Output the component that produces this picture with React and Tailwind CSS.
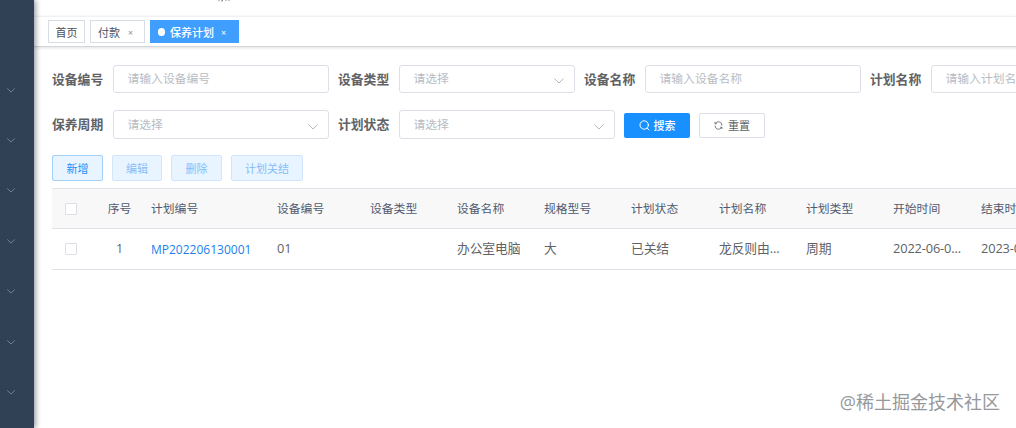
import React from 'react';

const MENU_ROWS = [0, 1, 2, 3, 4, 5, 6];

const COLUMNS = [
  { title: '计划编号', width: 'w-[126px]', value: 'MP202206130001', link: true },
  { title: '设备编号', width: 'w-[93px]', value: '01' },
  { title: '设备类型', width: 'w-[87px]', value: '' },
  { title: '设备名称', width: 'w-[87px]', value: '办公室电脑' },
  { title: '规格型号', width: 'w-[87px]', value: '大' },
  { title: '计划状态', width: 'w-[88px]', value: '已关结' },
  { title: '计划名称', width: 'w-[87px]', value: '龙反则由...' },
  { title: '计划类型', width: 'w-[87px]', value: '周期' },
  { title: '开始时间', width: 'w-[88px]', value: '2022-06-0...' },
  { title: '结束时间', width: 'w-[87px]', value: '2023-06-0...' },
];

function Chevron({ className }) {
  return (
    <svg className={className} viewBox="0 0 10 6" fill="none" stroke="currentColor" strokeLinecap="round">
      <path d="M0.7 0.8 L5 5 L9.3 0.8" />
    </svg>
  );
}

function Field({ label, placeholder, select, width = 'w-[216px]', height = 'h-[29px]' }) {
  return (
    <div className="flex shrink-0 items-center">
      <label className="w-[61px] shrink-0 whitespace-nowrap text-[12.8px] font-bold text-[#606266]">{label}</label>
      <div className={`flex items-center justify-between rounded-[3px] border border-[#dcdfe6] bg-white pr-[10px] pl-[13.5px] ${width} ${height}`}>
        <span className="whitespace-nowrap text-[11.8px] text-[#b8bcc4]">{placeholder}</span>
        {select && <Chevron className="mt-[4px] h-[6px] w-[10px] text-[#b4b8c0]" />}
      </div>
    </div>
  );
}

function Checkbox() {
  return <span className="block h-[12px] w-[12px] rounded-[1px] border border-[#dcdfe6] bg-white" />;
}

function Sidebar() {
  return (
    <aside className="relative z-10 flex w-[34px] shrink-0 flex-col bg-[#304156] pt-[65px] shadow-[2px_0_5px_rgba(0,21,41,0.4)]">
      {MENU_ROWS.map((row) => (
        <div key={row} className="flex h-[50.4px] shrink-0 items-center pl-[7px]">
          <Chevron className="h-[5px] w-[8px] text-[#8492a6]" />
        </div>
      ))}
    </aside>
  );
}

function Header() {
  return (
    <header className="h-[16px] shrink-0 pl-[184px]">
      {/* lower edge of the breadcrumb, the rest is scrolled away */}
      <svg className="h-[3px] w-[14px]" viewBox="0 0 14 3" fill="none" stroke="#8b8f96">
        <path d="M1.5 0 L0.5 1.2 M4.5 0 V1 H3 M8 0 V1 M11 0 V1" />
      </svg>
    </header>
  );
}

function Tabs() {
  return (
    <nav className="flex h-[31px] shrink-0 items-start gap-[5px] border-t border-b border-t-[#f0f1f3] border-b-[#d4d6da] pt-[3px] pl-[14px] text-[11px] shadow-[0_1px_3px_rgba(0,0,0,0.12)]">
      <span className="flex h-[23px] w-[37px] items-center justify-center border border-[#d8dce5] pt-px text-[#495060]">首页</span>
      <span className="flex h-[23px] w-[55px] items-center border border-[#d8dce5] pt-px pl-[7px] text-[#495060]">
        付款<i className="ml-[8px] text-[9px] text-[#8a8f99] not-italic">×</i>
      </span>
      <span className="flex h-[23px] w-[89px] items-center bg-[#409eff] pt-px pl-[8px] font-medium text-white">
        <i className="mr-[5px] h-[8px] w-[7px] rounded-full bg-white" />
        保养计划<i className="ml-[7px] text-[9px] not-italic">×</i>
      </span>
    </nav>
  );
}

function SearchForm() {
  return (
    <form className="flex flex-col gap-[17px]">
      <div className="flex gap-[9px]">
        <Field label="设备编号" placeholder="请输入设备编号" height="h-[28px]" />
        <Field label="设备类型" placeholder="请选择" select width="w-[176px]" height="h-[28px]" />
        <Field label="设备名称" placeholder="请输入设备名称" height="h-[28px]" />
        <Field label="计划名称" placeholder="请输入计划名称" height="h-[28px]" />
      </div>
      <div className="flex items-center gap-[9px]">
        <Field label="保养周期" placeholder="请选择" select />
        <Field label="计划状态" placeholder="请选择" select />
        <button type="button" className="mt-px flex h-[25px] w-[66px] items-center justify-center gap-[4px] rounded-[2px] bg-[#1890ff] text-[11px] font-medium text-white">
          <svg className="h-[11px] w-[11px]" viewBox="0 0 11 11" fill="none" stroke="currentColor" strokeLinecap="round">
            <circle cx="5.2" cy="5" r="4.2" />
            <path d="M8.3 8.2 L10 10" />
          </svg>
          搜索
        </button>
        <button type="button" className="mt-px flex h-[25px] w-[66px] items-center justify-center gap-[5px] rounded-[2px] border border-[#dcdfe6] text-[11px] text-[#606266]">
          <svg className="h-[9px] w-[9px]" viewBox="0 0 10 10" fill="none" stroke="currentColor" strokeWidth="0.9">
            <path d="M1.1 1 V3.1 H3.2 M1.3 3.1 A4 4 0 0 1 8.9 5" />
            <path d="M8.9 9 V6.9 H6.8 M8.7 6.9 A4 4 0 0 1 1.1 5" />
          </svg>
          重置
        </button>
      </div>
    </form>
  );
}

function Toolbar() {
  const disabled = 'flex h-[26px] items-center justify-center rounded-[2px] border border-[#d1e5fc] bg-[#e8f4ff] text-[#86bdf9]';
  return (
    <div className="mt-[16px] flex gap-[9px] text-[11px]">
      <button className="flex h-[26px] w-[51px] items-center justify-center rounded-[2px] border border-[#a3d0fb] bg-[#e8f4ff] text-[#1890ff]">新增</button>
      <button disabled className={`${disabled} w-[50px]`}>编辑</button>
      <button disabled className={`${disabled} w-[51px]`}>删除</button>
      <button disabled className={`${disabled} w-[72px]`}>计划关结</button>
    </div>
  );
}

function PlanTable() {
  return (
    <div className="mt-[7px] w-[1100px] border-t border-[#dfe2e8]">
      <div className="flex h-[40px] items-center border-b border-[#dfe2e8] bg-[#f8f8f9] text-[11.8px] text-[#515a6e]">
        <div className="w-[49px] shrink-0 pl-[13px]"><Checkbox /></div>
        <div className="w-[37px] shrink-0 text-center">序号</div>
        <div className="w-[13px] shrink-0" />
        {COLUMNS.map((col) => (
          <div key={col.title} className={`shrink-0 whitespace-nowrap ${col.width}`}>{col.title}</div>
        ))}
      </div>
      <div className="flex h-[41px] items-center border-b border-[#dfe2e8] text-[12.8px] text-[#606266]">
        <div className="w-[49px] shrink-0 pl-[13px]"><Checkbox /></div>
        <div className="w-[37px] shrink-0 text-center text-[12.5px]">1</div>
        <div className="w-[13px] shrink-0" />
        {COLUMNS.map((col) => (
          <div key={col.title} className={`shrink-0 whitespace-nowrap ${col.link ? '' : 'pb-[2px] tracking-[-0.01em]'} ${col.width}`}>
            {col.link ? <a className="text-[12px] font-medium text-[#1c7fea]">{col.value}</a> : col.value}
          </div>
        ))}
      </div>
    </div>
  );
}

export default function App() {
  return (
    <div className="relative flex h-[428px] w-[1016px] overflow-hidden bg-white font-['Open_Sans','Noto_Sans_CJK_SC',sans-serif] leading-none">
      <Sidebar />
      <div className="flex min-w-0 flex-1 flex-col overflow-hidden">
        <Header />
        <Tabs />
        <main className="flex flex-col pt-[18px] pl-[18px]">
          <SearchForm />
          <Toolbar />
          <PlanTable />
        </main>
      </div>
      <div className="absolute right-[16px] bottom-[17px] text-[18px] whitespace-nowrap text-[#96989c]">@稀土掘金技术社区</div>
    </div>
  );
}
